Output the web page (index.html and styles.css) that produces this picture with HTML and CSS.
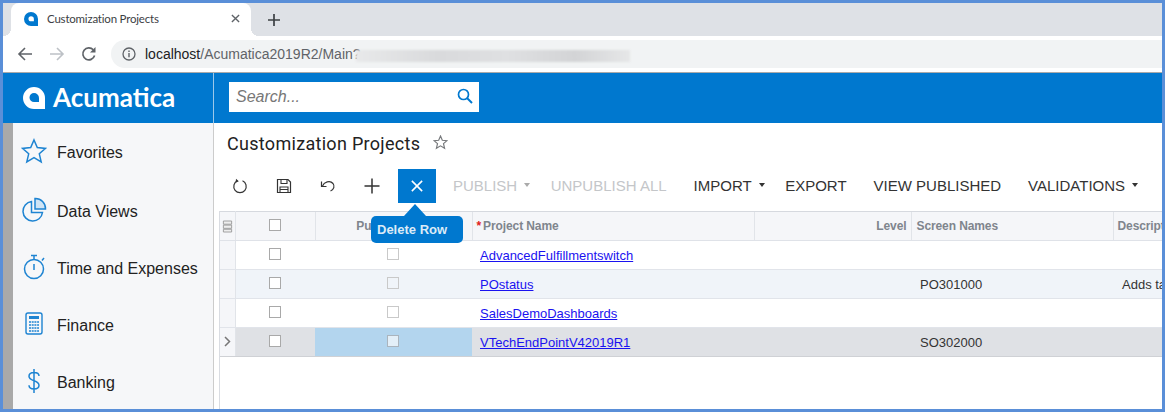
FILE: index.html
```html
<!DOCTYPE html>
<html lang="en">
<head>
    <meta charset="UTF-8">
    <meta name="viewport" content="width=device-width, initial-scale=1.0">
    <title>Customization Projects</title>
    <link rel="stylesheet" href="styles.css">
</head>
<body>
    <div class="tabstrip">
        <div class="tab">
            <svg class="favicon" viewBox="0 0 22 22"><path fill="#0078cf" fill-rule="evenodd" d="M11 0a11 11 0 0 0 0 22h11V11A11 11 0 0 0 11 0zm0 6.500a4.500 4.500 0 0 1 4.500 4.500v3.500H11a4 4 0 0 1 0-8z"/></svg>
            <span class="tab-title">Customization Projects</span>
            <svg class="tab-close" viewBox="0 0 10 10"><path d="M1 1l8 8M9 1l-8 8" stroke="#5f6368" stroke-width="1.500" fill="none"/></svg>
        </div>
        <svg class="new-tab" viewBox="0 0 12 12"><path d="M6 0v12M0 6h12" stroke="#3c4043" stroke-width="1.700" fill="none"/></svg>
    </div>

    <div class="addressbar">
        <svg class="nav-icon" viewBox="0 0 16 16"><path d="M15 8H2M8 2L2 8l6 6" stroke="#5f6368" stroke-width="1.600" fill="none"/></svg>
        <svg class="nav-icon" viewBox="0 0 16 16"><path d="M1 8h13M8 2l6 6-6 6" stroke="#bdc1c6" stroke-width="1.600" fill="none"/></svg>
        <svg class="nav-icon" viewBox="0 0 16 16"><path d="M13.600 9.600A6 6 0 1 1 12.300 3.800" stroke="#5f6368" stroke-width="1.700" fill="none"/><path d="M14.500 1v5.500H9z" fill="#5f6368"/></svg>
        <div class="omnibox">
            <svg class="info-icon" viewBox="0 0 14 14"><circle cx="7" cy="7" r="6" stroke="#5f6368" stroke-width="1.300" fill="none"/><path d="M7 6v4.200M7 3.600v1.400" stroke="#5f6368" stroke-width="1.400"/></svg>
            <span class="url"><span class="host">localhost</span>/Acumatica2019R2/Main?</span>
            <span class="url-blur"></span>
        </div>
    </div>

    <header class="topbar">
        <div class="brand">
            <svg class="brand-icon" viewBox="0 0 22 22"><path fill="#fff" fill-rule="evenodd" d="M11 0a11 11 0 0 0 0 22h11V11A11 11 0 0 0 11 0zm0 6a5 5 0 0 1 5 5v4h-5a4.500 4.500 0 0 1 0-9z"/></svg>
            <span class="brand-name">Acumatica</span>
        </div>
        <div class="search">
            <span class="search-text">Search...</span>
            <svg class="search-icon" viewBox="0 0 16 16"><circle cx="6.500" cy="6.500" r="5" stroke="#0078cf" stroke-width="1.700" fill="none"/><path d="M10 10l5 5" stroke="#0078cf" stroke-width="2" fill="none"/></svg>
        </div>
    </header>

    <div class="content">
        <div class="grip"></div>
        <nav class="sidebar">
            <a class="nav-item">
                <svg class="nav-glyph" viewBox="0 0 26 26"><path d="M13 2l3.300 7.600 8.200.8-6.200 5.400 1.900 8.100L13 19.700l-7.200 4.200 1.900-8.100L1.500 10.400l8.200-.8z" stroke="#1e84d2" stroke-width="1.500" fill="none"/></svg>
                <span>Favorites</span>
            </a>
            <a class="nav-item">
                <svg class="nav-glyph" viewBox="0 0 26 26"><path d="M10.500 4.500a9.800 9.800 0 1 0 11 11H10.500z" stroke="#1e84d2" stroke-width="1.500" fill="none"/><path d="M14 1.500a10 10 0 0 1 10.500 10.500H14z" stroke="#1e84d2" stroke-width="1.500" fill="#cfe4f5"/></svg>
                <span>Data Views</span>
            </a>
            <a class="nav-item">
                <svg class="nav-glyph" viewBox="0 0 26 26"><circle cx="13" cy="15" r="9.500" stroke="#1e84d2" stroke-width="1.500" fill="none"/><path d="M10 1.500h6M13 1.500v4M13 10v6M21 6.500l2-2.500" stroke="#1e84d2" stroke-width="1.500" fill="none"/></svg>
                <span>Time and Expenses</span>
            </a>
            <a class="nav-item">
                <svg class="nav-glyph" viewBox="0 0 26 26"><rect x="5" y="2" width="16" height="21" rx="2" stroke="#1e84d2" stroke-width="1.400" fill="none"/><path d="M8 5h10v3H8z" fill="#1e84d2"/><path d="M8 11h10M8 14h10M8 17h10M8 20h10" stroke="#1e84d2" stroke-width="1.600" stroke-dasharray="2 .7" fill="none"/></svg>
                <span>Finance</span>
            </a>
            <a class="nav-item">
                <svg class="nav-glyph" viewBox="0 0 26 26"><path d="M18 8c0-2.500-2-3.500-5-3.500S8 6 8 8.300c0 5.400 10 3.500 10 9 0 2.500-2 3.700-5 3.700s-5-1.200-5-3.700M13 1v24" stroke="#1e84d2" stroke-width="1.500" fill="none"/></svg>
                <span>Banking</span>
            </a>
        </nav>

        <main class="main">
            <div class="title-row">
                <h1>Customization Projects</h1>
                <svg class="title-star" viewBox="0 0 14 14"><path d="M7 1l1.700 3.900 4.300.4-3.200 2.800 1 4.200L7 10.100l-3.800 2.200 1-4.200L1 5.300l4.300-.4z" stroke="#77797c" stroke-width="1.100" fill="none"/></svg>
            </div>

            <div class="toolbar">
                <button class="tool">
                    <svg viewBox="0 0 16 16"><path d="M5.500 2.800a6.200 6.200 0 1 0 5 0" stroke="#333" stroke-width="1.200" fill="none"/><path d="M4 .8l2.800 2.400-3.300 1.500z" fill="#333"/></svg>
                </button>
                <button class="tool">
                    <svg viewBox="0 0 16 16"><path d="M2 1.500h10L14.500 4v10.500h-13v-13z" stroke="#333" stroke-width="1.200" fill="none"/><path d="M5 2v3.500h6V2M4 14.500V9h8v5.500M4 11.500h8" stroke="#333" stroke-width="1.100" fill="none"/></svg>
                </button>
                <button class="tool">
                    <svg viewBox="0 0 16 16"><path d="M2.500 8C4 4 10 2 13 5.500c2 2.500 1 6-2.500 7.500" stroke="#333" stroke-width="1.200" fill="none"/><path d="M1.500 3.500V8.500H6.500" stroke="#333" stroke-width="1.200" fill="none"/></svg>
                </button>
                <button class="tool">
                    <svg viewBox="0 0 16 16"><path d="M8 .5v15M.5 8h15" stroke="#333" stroke-width="1.500" fill="none"/></svg>
                </button>
                <button class="tool tool-delete">
                    <svg viewBox="0 0 14 14"><path d="M1 1l12 12M13 1L1 13" stroke="#fff" stroke-width="1.800" fill="none"/></svg>
                </button>
                <button class="action action-off action-publish">PUBLISH<i class="caret"></i></button>
                <button class="action action-off">UNPUBLISH ALL</button>
                <button class="action action-drop">IMPORT<i class="caret"></i></button>
                <button class="action">EXPORT</button>
                <button class="action">VIEW PUBLISHED</button>
                <button class="action action-drop">VALIDATIONS<i class="caret"></i></button>
            </div>

            <div class="grid-wrap">
                <table class="grid">
                    <colgroup>
                        <col class="col-gutter"><col class="col-check"><col class="col-pub"><col class="col-name"><col class="col-level"><col class="col-screen"><col class="col-desc">
                    </colgroup>
                    <thead>
                        <tr>
                            <th class="gutter">
                                <svg class="grid-icon" viewBox="0 0 12 14"><path d="M1.500 1h9v3.500h-9zM1.500 5.500h9V9h-9zM1.500 10h9v3h-9z" stroke="#999" stroke-width="1" fill="#eee"/></svg>
                            </th>
                            <th><span class="box"></span></th>
                            <th class="center pub-head">Published</th>
                            <th class="left name-head"><span class="req">*</span>Project Name</th>
                            <th class="right">Level</th>
                            <th class="left screen-head">Screen Names</th>
                            <th class="left desc-head">Description</th>
                        </tr>
                    </thead>
                    <tbody>
                        <tr>
                            <td class="gutter"></td>
                            <td><span class="box"></span></td>
                            <td><span class="box box-off"></span></td>
                            <td class="name"><a href="#">AdvancedFulfillmentswitch</a></td>
                            <td></td><td class="screen"></td><td class="desc"></td>
                        </tr>
                        <tr class="alt">
                            <td class="gutter"></td>
                            <td><span class="box"></span></td>
                            <td><span class="box box-off"></span></td>
                            <td class="name"><a href="#">POstatus</a></td>
                            <td></td><td class="screen">PO301000</td><td class="desc">Adds tabs</td>
                        </tr>
                        <tr>
                            <td class="gutter"></td>
                            <td><span class="box"></span></td>
                            <td><span class="box box-off"></span></td>
                            <td class="name"><a href="#">SalesDemoDashboards</a></td>
                            <td></td><td class="screen"></td><td class="desc"></td>
                        </tr>
                        <tr class="active">
                            <td class="gutter">
                                <svg class="row-arrow" viewBox="0 0 7 11"><path d="M1 1l4.500 4.500L1 10" stroke="#777" stroke-width="1.500" fill="none"/></svg>
                            </td>
                            <td><span class="box"></span></td>
                            <td class="selected"><span class="box box-off"></span></td>
                            <td class="name"><a href="#">VTechEndPointV42019R1</a></td>
                            <td></td><td class="screen">SO302000</td><td class="desc"></td>
                        </tr>
                    </tbody>
                </table>
            </div>

            <div class="tooltip">Delete Row</div>
        </main>
    </div>
</body>
</html>
```

FILE: styles.css
```css
* {
    box-sizing: border-box;
}
html, body {
    margin: 0;
    height: 100%;
}
body {
    display: flex;
    flex-direction: column;
    border: 3px solid #5a8fd8;
    font-family: "Liberation Sans", Arial, sans-serif;
    color: #222;
    background-color: #fff;
    overflow: hidden;
}

/* browser chrome */
.tabstrip {
    display: flex;
    align-items: center;
    flex: none;
    height: 33px;
    background-color: #dee1e6;
}
.tab {
    position: relative;
    display: flex;
    align-items: center;
    align-self: stretch;
    width: 240px;
    margin-left: 8px;
    padding: 0 11px 2px 13px;
    background-color: #fff;
    border-radius: 8px 8px 0 0;
}
.tab::before,
.tab::after {
    content: "";
    position: absolute;
    bottom: 0;
    width: 8px;
    height: 8px;
}
.tab::before {
    left: -8px;
    background: radial-gradient(circle at 0 0, transparent 8px, #fff 8px);
}
.tab::after {
    right: -8px;
    background: radial-gradient(circle at 100% 0, transparent 8px, #fff 8px);
}
.favicon {
    width: 14px;
    height: 14px;
    flex: none;
}
.tab-title {
    margin-left: 9px;
    font: 11.5px Lato, sans-serif;
    letter-spacing: -0.2px;
    color: #3c4043;
    flex: 1;
}
.tab-close {
    width: 9px;
    height: 9px;
    flex: none;
}
.new-tab {
    width: 12px;
    height: 12px;
    margin-left: 17px;
}
.addressbar {
    display: flex;
    align-items: center;
    flex: none;
    height: 37px;
    padding-left: 14px;
    background-color: #fff;
    border-bottom: 1px solid #aaa;
}
.nav-icon {
    width: 16px;
    height: 16px;
    margin-right: 16px;
    flex: none;
}
.addressbar .nav-icon:nth-child(3) {
    margin-right: 0;
}
.omnibox {
    display: flex;
    align-items: center;
    flex: 1;
    height: 28px;
    margin-left: 14px;
    padding-left: 11px;
    background-color: #f1f3f4;
    border-radius: 14px 0 0 14px;
}
.info-icon {
    width: 14px;
    height: 14px;
    flex: none;
}
.url {
    margin-left: 9px;
    font-size: 14px;
    color: #5f6368;
}
.host {
    color: #202124;
}
.url-blur {
    width: 274px;
    height: 12px;
    margin-top: 4px;
    margin-left: -5px;
    background: linear-gradient(90deg, #e8e9ea, #d9dadc 30%, #dfe0e2 55%, #d3d4d6 80%, #e6e7e8);
    filter: blur(1px);
}

/* app header */
.topbar {
    display: flex;
    align-items: center;
    flex: none;
    height: 50px;
    background-color: #0078cf;
}
.brand {
    display: flex;
    align-items: center;
    flex: none;
    width: 211px;
    height: 100%;
    padding-left: 20px;
    border-right: 1px solid #9cc8ea;
}
.brand-icon {
    width: 22px;
    height: 22px;
    flex: none;
    margin-top: -1px;
}
.brand-name {
    margin-left: 8px;
    margin-top: -2px;
    font: 700 26px Lato, sans-serif;
    color: #fff;
}
.search {
    display: flex;
    align-items: center;
    justify-content: space-between;
    width: 250px;
    height: 30px;
    margin-left: 15px;
    margin-bottom: 2px;
    padding: 0 6px 0 7px;
    background-color: #fff;
}
.search-text {
    font-style: italic;
    font-size: 16px;
    color: #777;
}
.search-icon {
    width: 16px;
    height: 16px;
    margin-bottom: 3px;
}

/* page */
.content {
    display: flex;
    flex: 1;
    min-height: 0;
}
.grip {
    width: 10px;
    flex: none;
    background-color: #a9a9a9;
}
.sidebar {
    width: 201px;
    flex: none;
    background-color: #f6f7f9;
    border-right: 1px solid #ccc;
}
.nav-item {
    display: flex;
    align-items: center;
    height: 57px;
    font-size: 16px;
    color: #222;
}
.nav-item:first-child {
    height: 60px;
    padding-bottom: 1px;
}
.nav-glyph {
    width: 26px;
    height: 26px;
    margin: -4px 10px 0 8px;
    flex: none;
}
.main {
    position: relative;
    flex: 1;
    min-width: 0;
}
.title-row {
    display: flex;
    align-items: center;
    height: 40px;
    padding-left: 13px;
}
h1 {
    margin: 0;
    font: 400 18px Roboto, sans-serif;
    color: #222;
    letter-spacing: 0.3px;
}
.title-star {
    width: 15px;
    height: 15px;
    margin: -2px 0 0 13px;
}
.toolbar {
    display: flex;
    align-items: center;
    height: 34px;
    margin-top: 6px;
    padding-left: 4px;
}
button {
    flex: none;
    border: none;
    background: none;
    padding: 0;
    font-family: inherit;
}
.tool {
    display: flex;
    align-items: center;
    justify-content: center;
    width: 44px;
    height: 34px;
}
.tool svg {
    width: 16px;
    height: 16px;
}
.tool-delete {
    width: 38px;
    margin-left: 4px;
    background-color: #0078cf;
}
.tool-delete svg {
    width: 12px;
    height: 12px;
}
.action {
    display: flex;
    align-items: center;
    padding: 0 13.5px 2px;
    height: 34px;
    font-size: 15px;
    color: #333;
    white-space: nowrap;
}
.action-publish {
    padding-left: 17px;
    padding-right: 7px;
}
.action-drop {
    padding-right: 7px;
}
.action-off {
    color: #c4c6c9;
}
.caret {
    width: 0;
    height: 0;
    margin-left: 7px;
    border-left: 3.5px solid transparent;
    border-right: 3.5px solid transparent;
    border-top: 4px solid currentColor;
}
.action-off .caret {
    color: #aaa;
}

/* grid */
.grid-wrap {
    position: absolute;
    top: 88px;
    left: 5px;
    bottom: 0;
    right: 0;
    overflow: hidden;
    border-left: 1px solid #d9dce2;
}
.grid {
    width: 1040px;
    table-layout: fixed;
    border-collapse: collapse;
    font-size: 13px;
}
.col-gutter { width: 15px; }
.col-check { width: 80px; }
.col-pub { width: 157px; }
.col-name { width: 282px; }
.col-level { width: 157px; }
.col-screen { width: 202px; }
.col-desc { width: 147px; }
th {
    height: 29px;
    padding: 0 4px;
    font-size: 12px;
    font-weight: 700;
    letter-spacing: -0.1px;
    color: #7f858d;
    background-color: #f5f6f9;
    border-top: 1px solid #d6d9df;
    border-bottom: 1px solid #dfe2e8;
    border-left: 1px solid #e1e4e9;
    white-space: nowrap;
    overflow: hidden;
}
th:first-child {
    border-left: none;
}
.left { text-align: left; }
.right { text-align: right; }
.center { text-align: center; }
th.pub-head {
    padding-right: 22px;
}
th.name-head {
    padding-left: 4px;
}
th.screen-head {
    padding-left: 5px;
}
th.desc-head {
    padding-left: 4px;
}
.req {
    color: #e02020;
    margin-right: 2px;
}
td {
    height: 29px;
    padding: 0;
    text-align: center;
    color: #333;
    border-bottom: 1px solid #e1e4ea;
    white-space: nowrap;
    overflow: hidden;
}
td.gutter, th.gutter {
    padding: 0;
    text-align: center;
    background-color: #f5f6f9;
    border-right: 1px solid #e1e4e9;
}
td.name {
    padding-left: 8px;
    text-align: left;
}
td.name a {
    color: #1a12f0;
}
td.screen {
    padding-left: 9px;
    text-align: left;
}
td.desc {
    padding-left: 9px;
    text-align: left;
}
.alt td {
    background-color: #f0f4f9;
}
.alt td.gutter {
    background-color: #f5f6f9;
}
.active td {
    background-color: #dfe1e5;
    border-bottom-color: #cfd1d5;
}
.active td.gutter {
    background-color: #f5f6f9;
}
.active td.selected {
    background-color: #b3d5ee;
}
.box {
    display: inline-block;
    width: 12px;
    height: 12px;
    vertical-align: middle;
    margin-bottom: 3px;
    background-color: #fff;
    border: 1px solid #a9a9a9;
}
.box-off {
    margin-right: 2px;
    background-color: transparent;
    border-color: #c9c9c9;
}
.active .box-off {
    background-color: #e3eff8;
    border-color: #aab4bd;
}
.grid-icon {
    width: 11px;
    height: 13px;
    vertical-align: middle;
}
.row-arrow {
    width: 7px;
    height: 11px;
    vertical-align: middle;
    margin-bottom: 3px;
}

/* tooltip hanging off the delete button */
.tooltip {
    position: absolute;
    top: 93px;
    left: 157px;
    width: 92px;
    height: 27px;
    padding-left: 6px;
    font-size: 13px;
    font-weight: 700;
    line-height: 28px;
    color: #dcebf7;
    background-color: #0078cf;
    border-radius: 5px;
}
.tooltip::before {
    content: "";
    position: absolute;
    top: -12px;
    left: 33px;
    border-left: 11px solid transparent;
    border-right: 11px solid transparent;
    border-bottom: 12px solid #0078cf;
}
```
